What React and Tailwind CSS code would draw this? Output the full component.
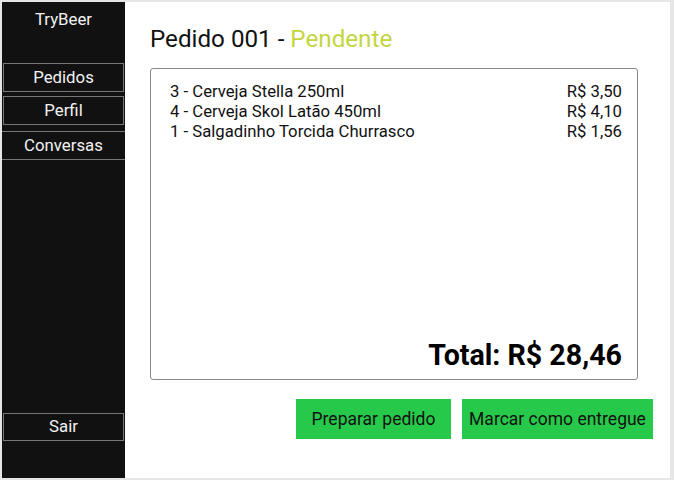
export default function App() {
  const items = [
    ["3 - Cerveja Stella 250ml", "R$ 3,50"],
    ["4 - Cerveja Skol Latão 450ml", "R$ 4,10"],
    ["1 - Salgadinho Torcida Churrasco", "R$ 1,56"],
  ];
  return (
    <div className="w-[674px] h-[480px] bg-[#e6e6e6] pt-[2px] pl-[2px] font-['Roboto',sans-serif]">
      <div className="w-[668px] h-[476px] flex bg-white">
        <aside className="w-[123px] bg-[#111111] flex flex-col items-center text-[#f2f2f2] text-[16.8px]">
          <div className="mt-[7px] h-[20px] leading-[20px] text-[16.8px]">TryBeer</div>
          <div className="mt-[34px] w-[121px] h-[29px] border border-[#777] flex items-center justify-center pt-[1px]">Pedidos</div>
          <div className="mt-[4px] w-[121px] h-[29px] border border-[#777] flex items-center justify-center pt-[1px]">Perfil</div>
          <div className="mt-[6px] w-[123px] h-[29px] border-y border-[#777] flex items-center justify-center pt-[1px]">Conversas</div>
          <div className="mt-auto mb-[37px] w-[121px] h-[28px] border border-[#777] flex items-center justify-center">Sair</div>
        </aside>
        <main className="flex-1 pl-[25px] pr-[15px]">
          <h1 className="mt-[22px] h-[30px] text-[24.2px] leading-[30px] text-[#111]">
            Pedido 001 - <span className="text-[#c3d63f]">Pendente</span>
          </h1>
          <div className="mt-[14px] w-[488px] h-[312px] border border-[#888] rounded-[3px] flex flex-col pt-[13px] pl-[19px] pr-[15px] pb-[7px]">
            {items.map(([name, price]) => (
              <div key={name} className="flex justify-between text-[16.7px] leading-[20px] text-[#111]">
                <span>{name}</span>
                <span>{price}</span>
              </div>
            ))}
            <div className="mt-auto text-right text-[28.6px] font-bold leading-[34px] text-black">Total: R$ 28,46</div>
          </div>
          <div className="mt-[19px] flex justify-end gap-[11px] pr-[2px]">
            <button className="w-[155px] h-[40px] bg-[#26c94a] text-[17.5px] text-[#111]">Preparar pedido</button>
            <button className="w-[191px] h-[40px] bg-[#26c94a] text-[17.5px] text-[#111]">Marcar como entregue</button>
          </div>
        </main>
      </div>
    </div>
  );
}
